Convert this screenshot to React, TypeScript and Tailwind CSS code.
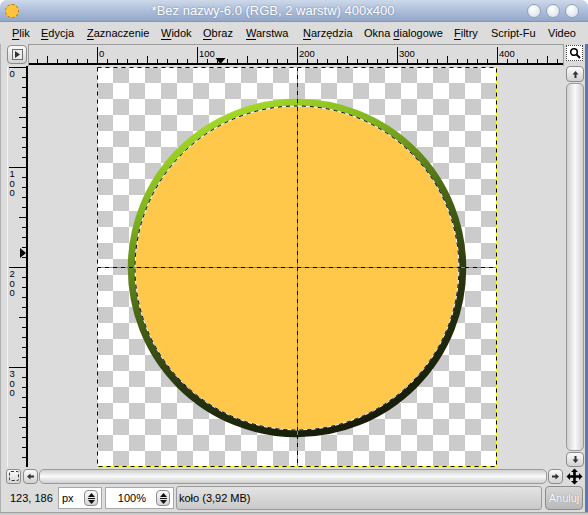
import React from 'react';

const FONT = "font-['Liberation_Sans',Arial,sans-serif]";

function TopRuler() {
  const ticks: React.ReactNode[] = [];
  const labels: React.ReactNode[] = [];
  for (let u = -60; u <= 460; u += 10) {
    const x = 69 + u + 0.5;
    if (x < 1 || x > 535) continue;
    const y1 = u % 100 === 0 ? 3 : u % 50 === 0 ? 12 : 15;
    ticks.push(<line key={u} x1={x} x2={x} y1={y1} y2={19} stroke="#000" />);
    if (u % 100 === 0 && u >= 0) {
      labels.push(
        <text key={'l' + u} x={x + 1.5} y={12.5} fontSize={9.5} fill="#000" fontFamily="Liberation Sans, Arial, sans-serif">
          {u}
        </text>
      );
    }
  }
  return (
    <svg width={536} height={22} className="block">
      <rect x={0} y={0} width={536} height={22} fill="#dcdcdc" />
      <line x1={0.5} x2={0.5} y1={0} y2={22} stroke="#9c9c9c" />
      <line x1={535.5} x2={535.5} y1={0} y2={22} stroke="#9c9c9c" />
      <line x1={0} x2={536} y1={0.5} y2={0.5} stroke="#9c9c9c" />
      {ticks}
      {labels}
      <rect x={1} y={19} width={534} height={2} fill="#000" />
      <polygon points="187.5,14 197.5,14 192.5,20" fill="#000" />
    </svg>
  );
}

function LeftRuler() {
  const ticks: React.ReactNode[] = [];
  const labels: React.ReactNode[] = [];
  for (let u = 0; u <= 400; u += 10) {
    const y = 1 + u + 0.5;
    const x1 = u % 100 === 0 ? 2 : u % 50 === 0 ? 12 : 15;
    ticks.push(<line key={u} x1={x1} x2={19} y1={y} y2={y} stroke="#000" />);
    if (u % 100 === 0 && u < 400) {
      String(u)
        .split('')
        .forEach((d, i) =>
          labels.push(
            <text key={'l' + u + i} x={2.5} y={y + 9.5 + i * 9.5} fontSize={9.5} fill="#000" fontFamily="Liberation Sans, Arial, sans-serif">
              {d}
            </text>
          )
        );
    }
  }
  return (
    <svg width={21} height={401} className="block">
      <rect x={0} y={0} width={21} height={401} fill="#dcdcdc" />
      <line x1={0.5} x2={0.5} y1={0} y2={401} stroke="#f4f4f4" />
      {ticks}
      {labels}
      <rect x={19} y={0} width={2} height={401} fill="#000" />
      <polygon points="13,182 13,192 19,187" fill="#000" />
    </svg>
  );
}

function ImageCanvas() {
  return (
    <svg width={400} height={400} className="block">
      <defs>
        <pattern id="checks" width={32} height={32} patternUnits="userSpaceOnUse">
          <rect width={32} height={32} fill="#ffffff" />
          <rect x={16} y={0} width={16} height={16} fill="#cbcbcb" />
          <rect x={0} y={16} width={16} height={16} fill="#cbcbcb" />
        </pattern>
        <linearGradient id="ring" x1="0.3" y1="0" x2="0.7" y2="1">
          <stop offset="0" stopColor="#a8dc28" />
          <stop offset="0.2" stopColor="#80b21e" />
          <stop offset="0.45" stopColor="#4b6716" />
          <stop offset="0.7" stopColor="#283510" />
          <stop offset="1" stopColor="#151a08" />
        </linearGradient>
      </defs>
      <rect width={400} height={400} fill="url(#checks)" />
      <circle cx={200} cy={201} r={165.5} fill="#ffc84b" stroke="url(#ring)" strokeWidth={7.5} />
      <circle cx={200} cy={201} r={162} fill="none" stroke="#fff" strokeWidth={1} />
      <circle cx={200} cy={201} r={162} fill="none" stroke="#000" strokeWidth={1} strokeDasharray="4 4" />
      <line x1={200.5} x2={200.5} y1={0} y2={400} stroke="#5a8fd0" />
      <line x1={200.5} x2={200.5} y1={0} y2={400} stroke="#000" strokeDasharray="4 4" />
      <line x1={0} x2={400} y1={200.5} y2={200.5} stroke="#5a8fd0" />
      <line x1={0} x2={400} y1={200.5} y2={200.5} stroke="#000" strokeDasharray="4 4" />
      <rect x={0.5} y={0.5} width={399} height={399} fill="none" stroke="#ffff00" />
      <rect x={0.5} y={0.5} width={399} height={399} fill="none" stroke="#000" strokeDasharray="4 4" />
    </svg>
  );
}

function Arrow({ dir }: { dir: 'up' | 'down' | 'left' | 'right' }) {
  const rot = { up: 0, right: 90, down: 180, left: 270 }[dir];
  return (
    <svg width={9} height={9} viewBox="0 0 9 9" style={{ transform: `rotate(${rot}deg)` }}>
      <path d="M4.5 1 L1.5 4.5 H3.5 V8 H5.5 V4.5 H7.5 Z" fill="#333" />
    </svg>
  );
}

function SmallButton({ children, className = '' }: { children?: React.ReactNode; className?: string }) {
  return (
    <div
      className={`flex items-center justify-center rounded-[4px] border border-[#8c8c8c] bg-linear-to-b from-[#fbfbfb] to-[#d2d2d2] ${className}`}
    >
      {children}
    </div>
  );
}

function Spinner() {
  return (
    <div className="w-[14px] h-[16px] rounded-[4px] border border-[#8c8c8c] bg-linear-to-b from-[#fafafa] to-[#d6d6d6] flex flex-col items-center justify-center gap-[1px]">
      <svg width={7} height={4}>
        <polygon points="0,4 7,4 3.5,0" fill="#111" />
      </svg>
      <div className="w-[7px] h-[1px] bg-[#111]" />
      <svg width={7} height={4}>
        <polygon points="0,0 7,0 3.5,4" fill="#111" />
      </svg>
    </div>
  );
}

const MENU: { label: string; u: number; w: number }[] = [
  { label: 'Plik', u: 0, w: 29 },
  { label: 'Edycja', u: 0, w: 46 },
  { label: 'Zaznaczenie', u: 0, w: 74 },
  { label: 'Widok', u: 0, w: 42 },
  { label: 'Obraz', u: 0, w: 43 },
  { label: 'Warstwa', u: 0, w: 57 },
  { label: 'Narzędzia', u: 0, w: 61 },
  { label: 'Okna dialogowe', u: 5, w: 90 },
  { label: 'Filtry', u: 0, w: 37 },
  { label: 'Script-Fu', u: -1, w: 57 },
  { label: 'Video', u: -1, w: 36 },
];

export default function App() {
  return (
    <div className={`w-[588px] h-[515px] bg-white ${FONT}`}>
      <div className="w-full h-full flex flex-col rounded-t-[7px] overflow-hidden bg-[#dcdcdc]">
        {/* title bar */}
        <div className="h-[22px] flex items-center bg-linear-to-b from-[#cdd8ea] via-[#aebfdb] to-[#93a7c8] border-b border-[#8496b5]">
          <div className="ml-[5px] w-[14px] h-[14px] rounded-full bg-[#ffc43c] border border-dashed border-[#b07a10]" />
          <div className="flex-1 text-center text-white text-[13px] leading-none [text-shadow:0_0_2px_#6a7fa5]">
            *Bez nazwy-6.0 (RGB, 2 warstw) 400x400
          </div>
          <div className="flex gap-[5px] mr-[9px]">
            {[0, 1, 2].map((i) => (
              <div
                key={i}
                className="w-[14px] h-[14px] rounded-full border border-[#8ea0bd] bg-radial-[at_40%_30%] from-white to-[#d6dbe3]"
              />
            ))}
          </div>
        </div>
        {/* menu bar */}
        <div className="h-[22px] flex items-center pl-[12px] text-[11px] text-black">
          {MENU.map((m) => (
            <div key={m.label} style={{ width: m.w }} className="shrink-0 whitespace-nowrap">
              {m.u >= 0 ? (
                <>
                  {m.label.slice(0, m.u)}
                  <span className="underline underline-offset-2">{m.label[m.u]}</span>
                  {m.label.slice(m.u + 1)}
                </>
              ) : (
                m.label
              )}
            </div>
          ))}
        </div>
        {/* body */}
        <div className="flex-1 flex flex-col border-l border-[#b0b0b0] border-r-[3px] border-r-[#5b79ad]">
          {/* ruler row */}
          <div className="h-[22px] flex items-start">
            <SmallButton className="ml-[6px] mt-[1px] w-[20px] h-[19px]">
              <div className="w-[11px] h-[11px] border border-[#6c6c6c] bg-[#ececec] flex items-center justify-center">
                <svg width={5} height={7}>
                  <polygon points="0,0 5,3.5 0,7" fill="#333" />
                </svg>
              </div>
            </SmallButton>
            <div className="ml-[1px]">
              <TopRuler />
            </div>
            <div className="ml-[2px] mt-[1px] w-[17px] h-[16px] border border-dotted border-[#444] bg-white flex items-center justify-center">
              <svg width={12} height={12} viewBox="0 0 12 12">
                <circle cx={5} cy={5} r={3.3} fill="none" stroke="#000" strokeWidth={1.6} />
                <line x1={7.4} y1={7.4} x2={11} y2={11} stroke="#000" strokeWidth={2} />
              </svg>
            </div>
          </div>
          {/* canvas row */}
          <div className="h-[401px] flex">
            <div className="ml-[6px]">
              <LeftRuler />
            </div>
            <div className="w-[536px] h-[401px] bg-[#dcdcdc] pl-[69px] pt-[1px]">
              <ImageCanvas />
            </div>
            <div className="ml-[2px] w-[18px] flex flex-col gap-[1px]">
              <SmallButton className="h-[16px]">
                <Arrow dir="up" />
              </SmallButton>
              <div className="flex-1 rounded-[5px] border border-[#9a9a9a] bg-linear-to-r from-[#d0d0d0] via-[#fafafa] to-[#cfcfcf]" />
              <SmallButton className="h-[15px]">
                <Arrow dir="down" />
              </SmallButton>
            </div>
          </div>
          {/* h-scroll row */}
          <div className="h-[17px] flex items-center pt-[1px]">
            <div className="ml-[5px] w-[15px] h-[15px] rounded-[3px] border border-[#8c8c8c] bg-linear-to-b from-[#fbfbfb] to-[#d6d6d6] flex items-center justify-center">
              <div className="w-[10px] h-[10px] border border-dashed border-[#333] rounded-[2px]" />
            </div>
            <SmallButton className="ml-[2px] w-[15px] h-[15px]">
              <Arrow dir="left" />
            </SmallButton>
            <div className="ml-[1px] w-[508px] h-[15px] rounded-[5px] border border-[#9a9a9a] bg-linear-to-b from-[#d0d0d0] via-[#fafafa] to-[#cfcfcf]" />
            <SmallButton className="ml-[1px] w-[15px] h-[15px]">
              <Arrow dir="right" />
            </SmallButton>
            <div className="ml-[3px] w-[17px] h-[17px] flex items-center justify-center">
              <svg width={17} height={17} viewBox="0 0 17 17">
                <path
                  d="M8.5 0.5 L12 4 H9.8 V7.2 H13 V5 L16.5 8.5 L13 12 V9.8 H9.8 V13 H12 L8.5 16.5 L5 13 H7.2 V9.8 H4 V12 L0.5 8.5 L4 5 V7.2 H7.2 V4 H5 Z"
                  fill="#000"
                />
              </svg>
            </div>
          </div>
          {/* status row */}
          <div className="h-[28px] flex items-center text-[11px] text-black">
            <div className="ml-[9px] w-[48px] whitespace-nowrap">123, 186</div>
            <div className="w-[44px] h-[22px] bg-white border border-[#a8a8a8] flex items-center pl-[3px] pr-[3px]">
              <span className="flex-1">px</span>
              <Spinner />
            </div>
            <div className="ml-[3px] w-[69px] h-[22px] bg-white border border-[#a8a8a8] flex items-center pr-[3px]">
              <span className="flex-1 text-right pr-[10px]">100%</span>
              <Spinner />
            </div>
            <div className="ml-[2px] w-[366px] h-[24px] rounded-[3px] border border-[#9a9a9a] bg-linear-to-b from-[#e4e4e4] to-[#c9c9c9] flex items-center pl-[2px]">
              koło (3,92 MB)
            </div>
            <div className="ml-[3px] w-[38px] h-[24px] rounded-[4px] border border-[#8c8c8c] bg-linear-to-b from-[#d6d6d6] to-[#b9b9b9] flex items-center justify-center text-white text-[11px] [text-shadow:0_0_1px_#777]">
              Anuluj
            </div>
          </div>
        </div>
        <div className="h-[3px] bg-[#c8c8c8] border-t border-[#a0a0a0]" />
      </div>
    </div>
  );
}
